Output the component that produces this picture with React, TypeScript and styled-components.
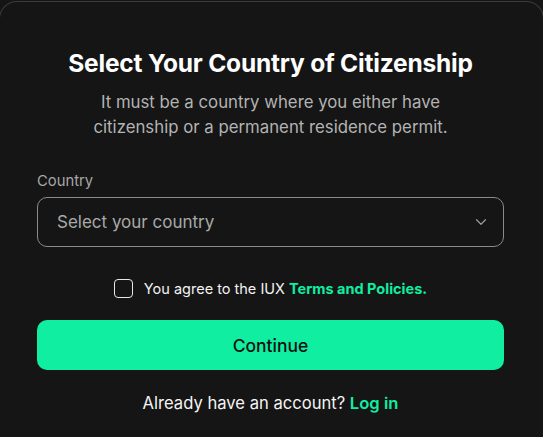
import React from "react";
import { useState } from "react";
import styled, { createGlobalStyle } from "styled-components";
import { ChevronDown } from "lucide-react";

const GlobalStyle = createGlobalStyle`
  html, body {
    margin: 0;
    padding: 0;
    background: #151515;
    overflow: hidden;
  }
  body {
    font-family: Inter, "Noto Sans", sans-serif;
  }
`;

const Card = styled.div`
  box-sizing: border-box;
  width: 545px;
  height: 436px;
  margin: 1px 0 0 -1px;
  padding: 45px 39px 0 37px;
  background: #151515;
  border: 1px solid #3c3c3c;
  border-bottom: none;
  border-radius: 18px 18px 0 0;
  display: flex;
  flex-direction: column;
`;

const Title = styled.h1`
  margin: 0;
  font-size: 24.5px;
  font-weight: 700;
  letter-spacing: -0.2px;
  line-height: 32px;
  color: #ffffff;
  text-align: center;
`;

const Subtitle = styled.p`
  margin: 11px 0 0;
  font-size: 16.8px;
  line-height: 25px;
  color: #b3b3b3;
  text-align: center;
`;

const Field = styled.div`
  display: flex;
  flex-direction: column;
  gap: 7px;
  margin-top: 32px;
`;

const Label = styled.label`
  font-size: 14.8px;
  line-height: 18px;
  color: #a8a8a8;
`;

const SelectBox = styled.button`
  box-sizing: border-box;
  height: 50px;
  padding: 0 13px 0 19px;
  display: flex;
  align-items: center;
  justify-content: space-between;
  background: transparent;
  border: 1px solid #8a8a8a;
  border-radius: 10px;
  font-family: inherit;
  font-size: 17px;
  color: #a9a9a9;
  cursor: pointer;
`;

const AgreeRow = styled.label`
  display: flex;
  align-items: center;
  justify-content: center;
  gap: 11px;
  margin-top: 32px;
  font-size: 14.5px;
  color: #f2f2f2;
  cursor: pointer;
`;

const Box = styled.span<{ $checked: boolean }>`
  box-sizing: border-box;
  width: 19px;
  height: 19px;
  border: 1.5px solid #e8e8e8;
  border-radius: 4px;
  background: ${({ $checked }) => ($checked ? "#10eea1" : "transparent")};
`;

const Green = styled.span<{ $weight?: number }>`
  color: #10eea1;
  font-weight: ${({ $weight }) => $weight ?? 700};
`;

const ContinueButton = styled.button`
  margin-top: 22px;
  height: 50px;
  border: none;
  border-radius: 10px;
  background: #10eea1;
  font-family: inherit;
  font-size: 17.5px;
  font-weight: 500;
  color: #111111;
  cursor: pointer;
`;

const Footer = styled.p`
  margin: 23px 0 0;
  text-align: center;
  font-size: 16.6px;
  color: #f4f4f4;
`;

const App: React.FC = () => {
  const [agreed, setAgreed] = useState<boolean>(false);

  return (
    <>
      <GlobalStyle />
      <Card>
        <Title>Select Your Country of Citizenship</Title>
        <Subtitle>
          It must be a country where you either have
          <br />
          citizenship or a permanent residence permit.
        </Subtitle>
        <Field>
          <Label>Country</Label>
          <SelectBox type="button">
            Select your country
            <ChevronDown size={18} strokeWidth={1.6} color="#9a9a9a" />
          </SelectBox>
        </Field>
        <AgreeRow onClick={() => setAgreed(!agreed)}>
          <Box $checked={agreed} />
          <span>
            You agree to the IUX <Green>Terms and Policies.</Green>
          </span>
        </AgreeRow>
        <ContinueButton>Continue</ContinueButton>
        <Footer>
          Already have an account? <Green $weight={600}>Log in</Green>
        </Footer>
      </Card>
    </>
  );
};

export default App;
